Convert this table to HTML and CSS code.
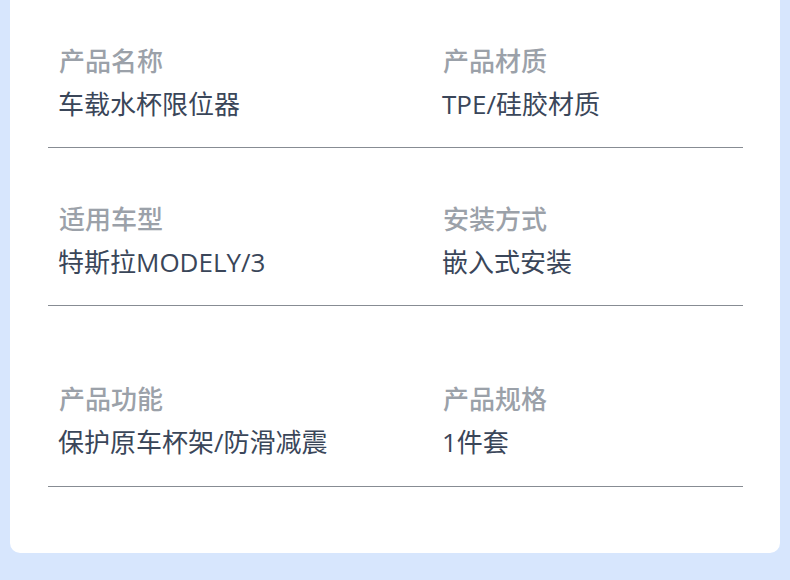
FILE: index.html
```html
<!DOCTYPE html>
<html lang="zh-CN">
<head>
<meta charset="utf-8">
<title>产品参数</title>
<link rel="stylesheet" href="styles.css">
</head>
<body>
<div class="card">
  <div class="row row-first">
    <div class="cell">
      <div class="label">产品名称</div>
      <div class="value">车载水杯限位器</div>
    </div>
    <div class="cell">
      <div class="label">产品材质</div>
      <div class="value">TPE/硅胶材质</div>
    </div>
  </div>
  <div class="row row-second">
    <div class="cell">
      <div class="label">适用车型</div>
      <div class="value">特斯拉MODELY/3</div>
    </div>
    <div class="cell">
      <div class="label">安装方式</div>
      <div class="value">嵌入式安装</div>
    </div>
  </div>
  <div class="row row-third">
    <div class="cell">
      <div class="label">产品功能</div>
      <div class="value">保护原车杯架/防滑减震</div>
    </div>
    <div class="cell">
      <div class="label">产品规格</div>
      <div class="value">1件套</div>
    </div>
  </div>
</div>
</body>
</html>
```
FILE: styles.css
```css
html, body {
  margin: 0;
  padding: 0;
}
body {
  background: #d7e6fd;
  font-family: "Open Sans", "Noto Sans CJK SC", sans-serif;
  width: 790px;
  height: 580px;
  overflow: hidden;
}
.card {
  margin: 0 10px;
  background: #ffffff;
  border-radius: 0 0 10px 10px;
  padding: 0 37px 66px 38px;
}
.row {
  display: grid;
  grid-template-columns: 384px 1fr;
  padding-left: 10px;
  padding-bottom: 25px;
  border-bottom: 1px solid #878c93;
}
.row-first { padding-top: 43px; }
.row-second { padding-top: 53px; }
.row-third { padding-top: 75px; padding-bottom: 26px; }
.label {
  font-size: 26px;
  line-height: 36px;
  font-weight: 500;
  color: #9ba1a9;
  margin-bottom: 7px;
  padding-left: 1px;
}
.value {
  font-size: 26px;
  line-height: 36px;
  color: #3a4659;
}
```
